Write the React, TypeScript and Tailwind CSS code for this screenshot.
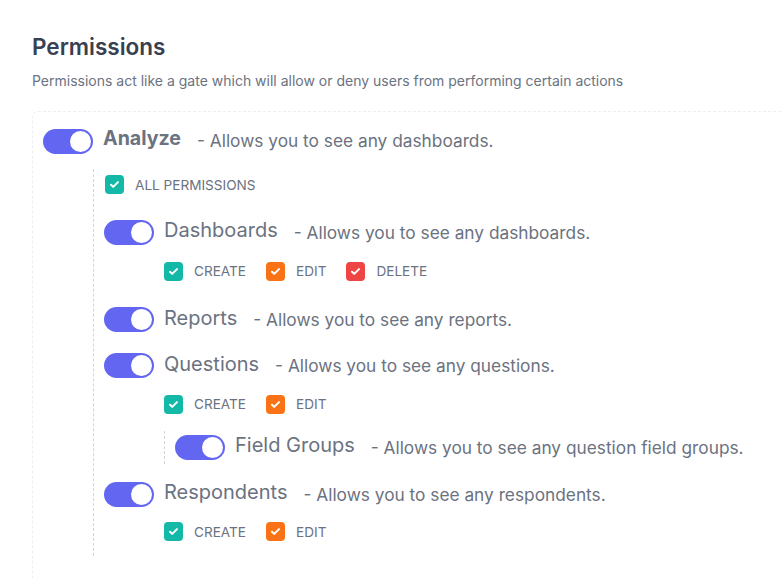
import React, { useState } from 'react';

type Tone = 'teal' | 'orange' | 'red';

const toneClass: Record<Tone, string> = {
  teal: 'bg-[#14b8a6]',
  orange: 'bg-[#f97316]',
  red: 'bg-[#ef4444]',
};

function Toggle({ on = true }: { on?: boolean }) {
  return (
    <div
      className={`relative w-[50px] h-[25px] rounded-full shrink-0 ${on ? 'bg-[#6366f1]' : 'bg-gray-300'}`}
    >
      <span
        className={`absolute top-[2px] w-[21px] h-[21px] rounded-full bg-white ${on ? 'right-[2px]' : 'left-[2px]'}`}
      />
    </div>
  );
}

function Check({ tone, label }: { tone: Tone; label: string }) {
  return (
    <div className="flex items-center gap-[11px]">
      <span className={`w-[19px] h-[19px] rounded-[4px] flex items-center justify-center ${toneClass[tone]}`}>
        <svg width="11" height="11" viewBox="0 0 12 12" fill="none">
          <path d="M2.2 6.3l2.4 2.3 5.2-5.2" stroke="white" strokeWidth="2.2" strokeLinecap="round" strokeLinejoin="round" />
        </svg>
      </span>
      <span className="text-[13.6px] text-[#6b7280] uppercase">{label}</span>
    </div>
  );
}

function Node({ title, desc, bold = false }: { title: string; desc: string; bold?: boolean }) {
  return (
    <div className="flex items-center">
      <Toggle />
      <span
        className={
          bold
            ? 'ml-[10px] text-[19.6px] font-bold text-[#6b7280] leading-none -mt-[4px]'
            : 'ml-[10px] text-[20px] text-[#6b7280] leading-none -mt-[4px]'
        }
      >
        {title}
      </span>
      <span className="ml-[16px] text-[17.3px] text-[#6b7280] leading-none">- {desc}</span>
    </div>
  );
}

export default function App() {
  const [checks] = useState(true);

  return (
    <div className="bg-white h-[578px] w-[783px] overflow-hidden pl-[32px] pt-[36px]" style={{ fontFamily: 'Inter, "Noto Sans", sans-serif' }}>
      <h2 className="text-[22.5px] font-semibold text-[#374151] leading-none">Permissions</h2>
      <p className="mt-[15px] text-[14px] text-[#6b7280] leading-none">
        Permissions act like a gate which will allow or deny users from performing certain actions
      </p>

      <div className="mt-[23px] w-[800px] border border-dashed border-[#eceef1] rounded-md pl-[10px] pt-[17px] pb-[60px]">
        <Node title="Analyze" desc="Allows you to see any dashboards." bold />

        <div className="ml-[50px] mt-[15px] border-l border-dashed border-[#d1d5db] pl-[10px] pt-[6px]">
          {checks && (
            <div className="ml-[1px]">
              <Check tone="teal" label="All permissions" />
            </div>
          )}

          {/* Dashboards */}
          <div className="mt-[25px]">
            <Node title="Dashboards" desc="Allows you to see any dashboards." />
            <div className="ml-[60px] mt-[16px] flex gap-[20px]">
              <Check tone="teal" label="Create" />
              <Check tone="orange" label="Edit" />
              <Check tone="red" label="Delete" />
            </div>
          </div>

          {/* Reports */}
          <div className="mt-[26px]">
            <Node title="Reports" desc="Allows you to see any reports." />
          </div>

          {/* Questions */}
          <div className="mt-[21px]">
            <Node title="Questions" desc="Allows you to see any questions." />
            <div className="ml-[60px] mt-[16px] flex gap-[20px]">
              <Check tone="teal" label="Create" />
              <Check tone="orange" label="Edit" />
            </div>
            <div className="ml-[60px] mt-[16px] border-l border-dashed border-[#d1d5db] pl-[10px] py-[4px]">
              <Node title="Field Groups" desc="Allows you to see any question field groups." />
            </div>
          </div>

          {/* Respondents */}
          <div className="mt-[18px]">
            <Node title="Respondents" desc="Allows you to see any respondents." />
            <div className="ml-[60px] mt-[15px] flex gap-[20px]">
              <Check tone="teal" label="Create" />
              <Check tone="orange" label="Edit" />
            </div>
          </div>
          <div className="h-[14px]" />
        </div>
      </div>
    </div>
  );
}
